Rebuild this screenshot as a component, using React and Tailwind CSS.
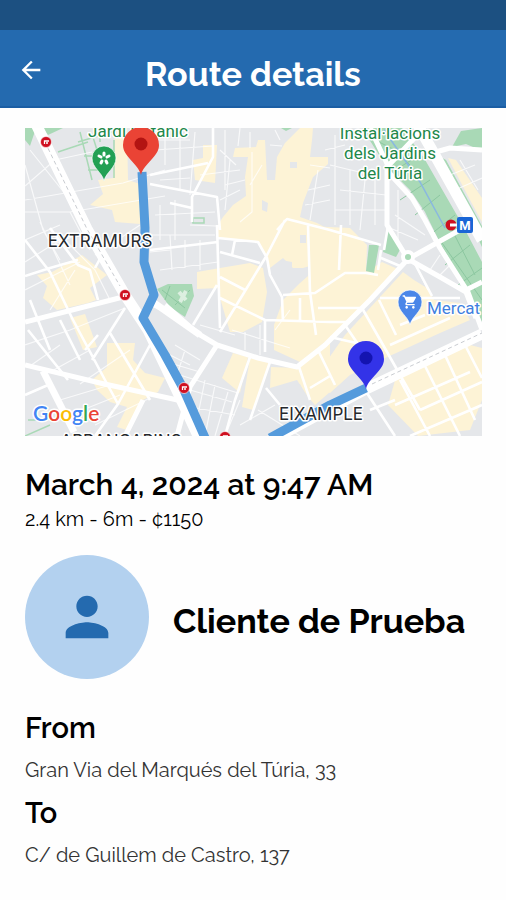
import React from 'react';
import { MdArrowBack, MdPerson, MdShoppingCart } from 'react-icons/md';

const ride = {
    date: 'March 4, 2024 at 9:47 AM',
    summary: '2.4 km - 6m - ¢1150',
    client: 'Cliente de Prueba',
    from: 'Gran Via del Marqués del Túria, 33',
    to: 'C/ de Guillem de Castro, 137'
};

// Commercial areas
const blocks = [
    'M223 217L233 205L246 196L245 177L248 157H233L235 148L256 147L258 140H265L267 180H275L277 157L285 143L300 128H313L312 140L310 157H328V164L313 177L303 203L300 217L317 223L330 230V260L303 268L293 268L283 258L270 268L265 255L258 242L218 238V225Z',
    'M197 272L220 268L250 263L263 268L267 292L262 322L243 332H230L220 298L218 288L197 289Z',
    'M274 325L283 300L300 283L308 276V226L350 228L367 245L366 272L382 262L400 270L355 315L325 342L300 362L274 350Z',
    'M403 272L414 280L427 288L434 300L460 303L470 320L440 333L372 364L350 375L330 393L310 385L345 335Z',
    'M396 377L470 345L482 348V400L470 430L418 436L388 405Z',
    'M250 358L270 363L253 410L242 407Z',
    'M233 353L248 357L240 393L222 378Z',
    'M271 367L299 368L330 342V392L315 405L308 397L297 380L270 388Z',
    'M98 180L113 178L115 128H127L128 180L140 184V224L115 222L112 210L90 205L103 194Z',
    'M37 275L52 272L70 262L82 255L107 275L90 288L96 300L88 303L57 310L43 298L47 286Z',
    'M70 318L85 314L97 347L83 350Z',
    'M107 343H135L133 360L145 373L165 378L158 392L143 400L127 430L117 427L127 407L110 402L97 390L92 380L107 367Z',
    'M203 145H217L215 183L195 180L193 160L203 158Z',
    'M448 158L456 160L482 198V222L470 200Z'
];

const greyPatches = [
    'M290 162H297V168H290Z', 'M300 235H306V243H300Z', 'M262 200L268 203L267 212L262 210Z',
    'M281 260L292 262V275L282 277Z', 'M285 388L300 384L305 395L290 398Z'
];

const parks = [
    'M362 128H402L424 158L462 224L482 262V322L466 288L440 243L425 212L410 190L386 166Z',
    'M437 155L446 160L482 226V247Z',
    'M452 147L461 131L482 128V151L466 144Z',
    'M369 245L379 245L374 273L366 271Z',
    'M388 228L401 248L396 257L383 252Z',
    'M157 289L168 284H192L194 296L185 317L170 307Z',
    'M25 128H36L30 146L25 140Z',
    'M43 128H63L48 135Z',
    'M281 128H292L286 131Z'
];

const lanes =
    'M25 200L123 183L165 170M25 212L70 212L165 196M25 165L43 230L60 260M30 150L70 200M25 186L55 160L92 152M70 212L90 250' +
    'M25 240L60 225M25 262L52 245L84 232M40 222L70 285M60 235L95 270L110 300M25 290L80 262M50 310L75 270M95 255L140 225' +
    'M25 345L70 330L125 308M30 366L60 345M50 372L90 350M80 384L130 350M60 400L110 385M70 415L120 395M95 425L150 398' +
    'M150 235H215M150 252L170 250M160 205V240M175 200V240M190 225L216 226M155 215L215 212M160 270L218 262M170 235L172 270M185 240V268M200 240V270' +
    'M150 140H190M155 150L213 146M165 128V165M180 130V190M195 132L190 195M160 180L190 178M200 175L240 170M225 130V190M240 128L238 146M250 132V148M220 150L236 165M225 185L245 180M220 200L240 190M230 160L225 210' +
    'M252 152V212L240 222M262 165L250 185M275 130L280 140M270 145L282 146M310 165L330 168M308 190L330 185M305 205L330 200M318 170L310 220M335 135V225M350 170V225M365 180L360 230M325 150L345 145M330 165L372 175M340 190L386 195M335 210H386M375 170V225' +
    'M395 215L425 235M390 228L418 240M398 190V240M430 270L440 255M440 275L450 265M418 270L428 290' +
    'M450 175L475 165M455 190L482 178M460 160L478 190' +
    'M200 325L235 335M232 330L290 348M245 332V350M260 325V355M275 330L290 310M175 345L200 360M160 360L200 372M170 372L238 393M180 405L235 415M190 390L232 402M205 380L195 430M215 385L205 436M228 392L215 436M240 400L225 436' +
    'M258 410L300 436M240 425L275 405M185 350L178 372M160 350L190 365';

const streets =
    'M217 225L220 328M220 230L217 197L170 188L150 184M213 128V157L192 197V222M150 175L208 163M150 250L218 242M170 203L192 208' +
    'M218 238L258 242L267 258L270 275L282 297L283 322M285 220L267 255L220 332M220 252L260 263M235 240L232 255M220 277L245 290M220 298L265 320L330 322L350 322' +
    'M283 295L315 293L330 283L345 273L366 273L378 275M308 225L310 292L316 335M277 230L287 219L330 230L381 245M217 285L193 325M265 320V352M300 298V322M318 308H360' +
    'M250 357L235 400L225 436M270 362L250 420M266 388L280 405M299 367L310 400M310 388L330 376M318 350L335 385M330 337L365 345' +
    'M381 250L378 270M341 225L339 270M381 258L400 266M384 250L388 226M414 262L432 296M380 298H460M379 300L396 335M345 325L362 350M362 308L420 410M400 325L425 315M390 345L450 318' +
    'M420 410L482 382M400 380L430 436M425 366L460 436M445 355L475 420M465 345L482 378M395 405L470 372M410 436L482 405M365 390L395 436M370 410L395 400' +
    'M25 240L50 272L72 318L105 380L118 404M50 228L78 265L90 270L98 300M25 276L50 268L78 260M60 320L80 360M30 300L50 350M95 268L102 255M125 308L92 360M150 345L118 404L95 436M110 333L150 400M28 330L68 380M25 395L48 385M98 335L85 350';

const avenues =
    'M25 322L123 297M25 365L100 383L182 401M165 305L197 333L217 345L258 358L297 367L325 345L348 322L370 300L408 259' +
    'M217 345L190 387L177 436M408 259L467 226M408 259L440 277L466 292L476 318M387 165V225L406 256M388 172L412 198L425 220L440 248L468 292L482 330M466 290L482 282' +
    'M370 128L388 166L422 130M425 155L450 148L482 150M143 400L125 436M150 303L165 310';

const pinPath = 'M0 0C-3 -12 -18 -18 -18 -30A18 18 0 0 1 18 -30C18 -18 3 -12 0 0Z';

const RoutePin = ({ x, y, fill, dot }) => (
    <g transform={`translate(${x} ${y})`}>
        <path d={pinPath} fill={fill} />
        <circle cy="-31" r="6.5" fill={dot} />
    </g>
);

const PlacePin = ({ x, y, fill, children }) => (
    <g transform={`translate(${x} ${y})`}>
        <path
            d="M0 0C-2 -9 -12 -13 -12 -23A12 12 0 0 1 12 -23C12 -13 2 -9 0 0Z"
            fill={fill}
            stroke="#fff"
            strokeOpacity="0.7"
        />
        {children}
    </g>
);

const MetroDot = ({ x, y }) => (
    <g transform={`translate(${x} ${y})`}>
        <circle r="5.5" fill="#cf1020" stroke="#fff" strokeOpacity="0.6" />
        <path d="M3 -1H-1.5V2M0 1H2" fill="none" stroke="#fff" strokeWidth="1.3" />
    </g>
);

const RouteMap = () => (
    <svg
        viewBox="25 128 457 308"
        className="block w-full h-auto font-['Roboto',sans-serif]"
        role="img"
        aria-label="Route map"
    >
        <rect x="25" y="128" width="457" height="308" fill="#e5e7ea" />

        <g fill="#fdf3d6">
            {blocks.map((d) => <path key={d} d={d} />)}
        </g>
        <g fill="#e5e7ea">
            {greyPatches.map((d) => <path key={d} d={d} />)}
        </g>
        <g fill="#a9d9b6">
            {parks.map((d) => <path key={d} d={d} />)}
        </g>

        {/* Park paths */}
        <path
            d="M80 132L92 180M78 142L112 132M84 156H94M88 170H98M100 130V142M92 134L97 150M25 436L50 425M28 420H46M114 140V178M58 152L88 142M193 223H204V218H193Z"
            fill="none" stroke="#a9d9b6" strokeWidth="1.5"
        />
        <path
            d="M375 140L395 150L410 165M400 200L430 180M415 215L440 195M430 235L455 215M445 265L470 245M458 285L482 268M440 240L482 300M452 230L475 275M395 170L420 155M162 290L185 308M170 286L165 300M175 305L190 290"
            fill="none" stroke="#8cc7a0"
        />
        <path d="M384 130L420 182L445 228" fill="none" stroke="#8ab8e0" strokeWidth="1.5" />
        <path d="M179 292L186 300M186 291L180 302" stroke="#dcefe0" strokeWidth="4" />

        {/* Road network */}
        <g fill="none" stroke="#fff" strokeLinejoin="round">
            <path d={lanes} strokeOpacity="0.75" strokeWidth="1.2" />
            <path d={streets} strokeWidth="2.6" />
            <path d={avenues} strokeWidth="5" />
            <path d="M43 371L74 432M150 300L200 335" strokeWidth="7" />
            <path d="M35 122L87 229L125 295L148 330L180 397L200 440M416 122L432 150L470 218L482 240M262 445L366 389L482 334" strokeWidth="11" />
        </g>
        <circle cx="408" cy="257" r="7" fill="#fff" />
        <circle cx="408" cy="257" r="3" fill="#a9d9b6" />
        <path
            d="M45 142L87 229L120 286M372 384L482 333"
            fill="none" stroke="#c9ccd1" strokeDasharray="4 3"
        />

        {/* Route */}
        <g fill="none" stroke="#559bdc" strokeWidth="9" strokeLinejoin="round">
            <path d="M142 172L145 228L144 262L154 295L143 318L165 355L183 388L206 440" />
            <path d="M366 388L330 405L270 438" />
        </g>

        <MetroDot x={46} y={142} />
        <MetroDot x={125} y={295} />
        <MetroDot x={184} y={388} />
        <MetroDot x={225} y={437} />

        {/* Metro station */}
        <circle cx="451" cy="225" r="5.5" fill="#cf1020" />
        <path d="M450 225H457" stroke="#fff" strokeWidth="3" />
        <rect x="457" y="217" width="16" height="16" rx="2" fill="#1a66d6" />
        <text x="465" y="230" textAnchor="middle" fontSize="13" fontWeight="700" fill="#fff">M</text>

        <g stroke="#fff" strokeWidth="3" strokeLinejoin="round" paintOrder="stroke">
            <g fill="#21874a" fontSize="17" textAnchor="middle">
                <text x="138" y="137">Jardí Botànic</text>
                <text x="390" y="139">Instal·lacions</text>
                <text x="390" y="159">dels Jardins</text>
                <text x="390" y="179">del Túria</text>
            </g>
            <g fill="#25282c" fontSize="17" textAnchor="middle" className="font-['Inter',sans-serif]">
                <text x="100" y="247">EXTRAMURS</text>
                <text x="321" y="420">EIXAMPLE</text>
                <text x="121" y="447">ARRANCAPINS</text>
            </g>
            <text x="427" y="314" fontSize="17" fill="#3f7fe0">Mercat</text>
            <text x="33" y="421" fontSize="21" fontWeight="600" className="font-['Lato',sans-serif]">
                <tspan fill="#4285f4">G</tspan>
                <tspan fill="#ea4335">o</tspan>
                <tspan fill="#fbbc05">o</tspan>
                <tspan fill="#4285f4">g</tspan>
                <tspan fill="#34a853">l</tspan>
                <tspan fill="#ea4335">e</tspan>
            </text>
        </g>

        <PlacePin x={104} y={181} fill="#23a054">
            <g stroke="#fff" strokeWidth="3" strokeLinecap="round">
                <path d="M0 -26V-28M3 -24L5 -25M2 -20L3 -18M-2 -20L-3 -18M-3 -24L-5 -25" />
            </g>
        </PlacePin>
        <PlacePin x={410} y={325} fill="#4a86e8">
            <MdShoppingCart x="-8" y="-31" size={16} color="#fff" />
        </PlacePin>
        <RoutePin x={141} y={175} fill="#ea4335" dot="#b31412" />
        <RoutePin x={366} y={389} fill="#3333e8" dot="#1414b0" />
    </svg>
);

const Address = ({ label, value }) => (
    <div>
        <h3 className="text-[29px] leading-10 font-semibold">{label}</h3>
        <p className="text-xl leading-[45px] text-[#333333]">{value}</p>
    </div>
);

const App = () => {
    return (
        <div className="min-h-screen bg-[#fefefe] text-black font-['Raleway','Lato',sans-serif] oldstyle-nums">
            {/* Status bar */}
            <div className="h-[30px] bg-[#1c5081]" />

            <header className="h-[78px] pt-1 grid grid-cols-[64px_1fr_64px] items-center bg-[#246aaf] border-b-2 border-[#1b5ea4] text-white">
                <button type="button" aria-label="Back" className="pl-[17px]">
                    <MdArrowBack className="w-7 h-7" />
                </button>
                <h1 className="pt-2 text-[34px] leading-10 font-bold text-center">Route details</h1>
            </header>

            <main className="pl-[25px] pr-6 pt-5">
                <RouteMap />

                <h2 className="mt-[29px] text-3xl leading-10 font-semibold">{ride.date}</h2>
                <p className="text-xl leading-7">{ride.summary}</p>

                <div className="mt-[22px] flex items-center gap-6">
                    <div className="w-[124px] h-[124px] shrink-0 rounded-full bg-[#b3d1ef] text-[#246aaf] flex items-center justify-center">
                        <MdPerson className="w-16 h-16" />
                    </div>
                    <h2 className="pt-2 text-[34px] leading-10 font-bold">{ride.client}</h2>
                </div>

                <section className="mt-[29px]">
                    <Address label="From" value={ride.from} />
                    <Address label="To" value={ride.to} />
                </section>
            </main>
        </div>
    );
};

export default App;
